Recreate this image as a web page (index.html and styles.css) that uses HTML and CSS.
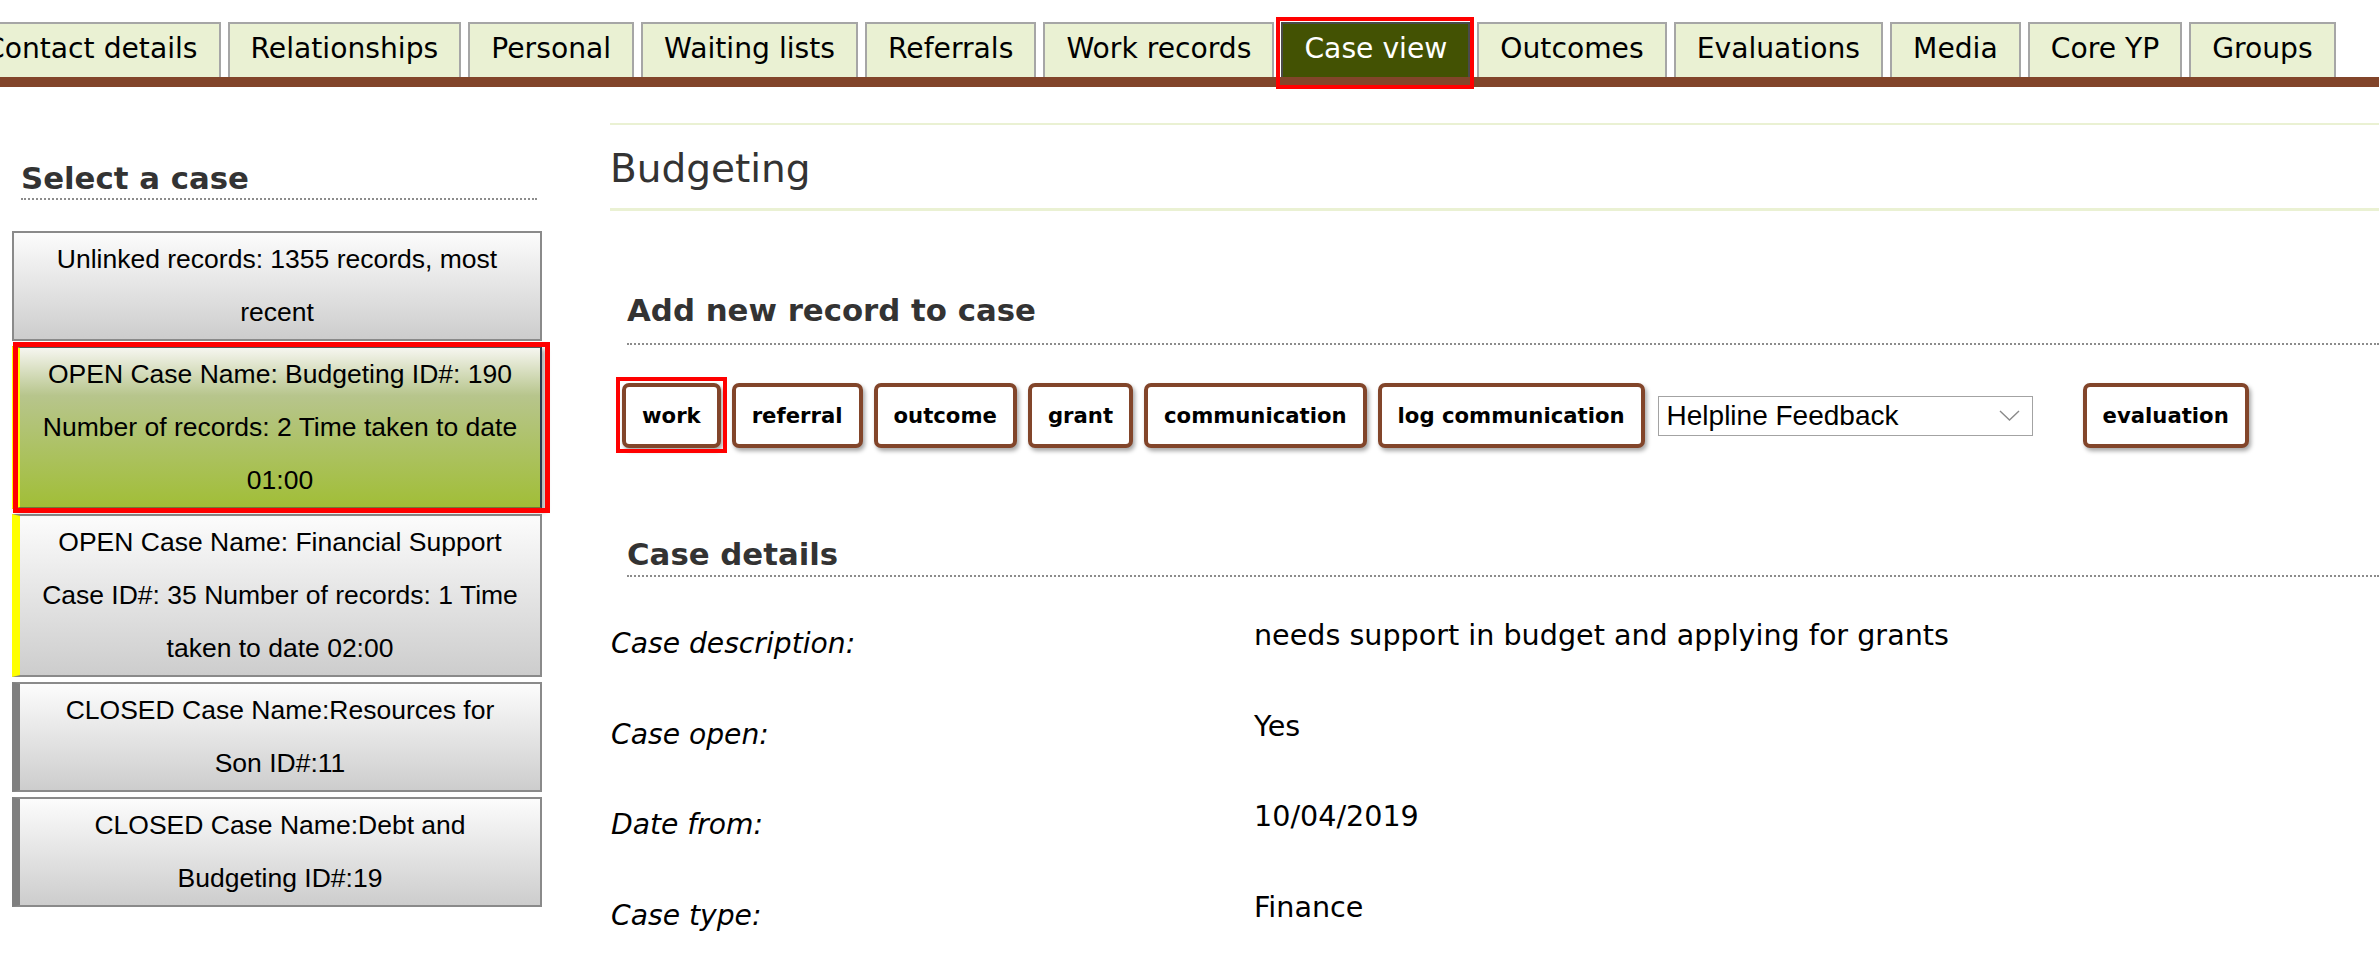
FILE: index.html
```html
<!DOCTYPE html>
<html lang="en">
<head>
<meta charset="utf-8">
<title>Case view</title>
<link rel="stylesheet" href="styles.css">
</head>
<body>
<nav class="tabbar">
  <ul class="tabs">
    <li class="tab">Contact details</li>
    <li class="tab">Relationships</li>
    <li class="tab">Personal</li>
    <li class="tab">Waiting lists</li>
    <li class="tab">Referrals</li>
    <li class="tab">Work records</li>
    <li class="tab active">Case view</li>
    <li class="tab">Outcomes</li>
    <li class="tab">Evaluations</li>
    <li class="tab">Media</li>
    <li class="tab">Core YP</li>
    <li class="tab">Groups</li>
  </ul>
</nav>
<main class="page">
  <aside class="sidebar">
    <h2 class="side-title">Select a case</h2>
    <ul class="cases">
      <li class="case case-unlinked">Unlinked records: 1355 records, most<br>recent</li>
      <li class="case case-open selected">OPEN Case Name: Budgeting ID#: 190<br>Number of records: 2 Time taken to date<br>01:00</li>
      <li class="case case-open">OPEN Case Name: Financial Support<br>Case ID#: 35 Number of records: 1 Time<br>taken to date 02:00</li>
      <li class="case case-closed">CLOSED Case Name:Resources for<br>Son ID#:11</li>
      <li class="case case-closed">CLOSED Case Name:Debt and<br>Budgeting ID#:19</li>
    </ul>
  </aside>
  <section class="content">
    <h1 class="case-title">Budgeting</h1>
    <h2 class="section-title add-title">Add new record to case</h2>
    <div class="actions">
      <button class="btn btn-marked" type="button">work</button>
      <button class="btn" type="button">referral</button>
      <button class="btn" type="button">outcome</button>
      <button class="btn" type="button">grant</button>
      <button class="btn" type="button">communication</button>
      <button class="btn" type="button">log communication</button>
      <div class="select">
        <span class="select-value">Helpline Feedback</span>
        <svg class="chevron" width="21" height="11" viewBox="0 0 21 11" aria-hidden="true"><path d="M1 1 L10.5 10 L20 1" fill="none" stroke="#8a8a8a" stroke-width="1.4"/></svg>
      </div>
      <button class="btn" type="button">evaluation</button>
    </div>
    <h2 class="section-title details-title">Case details</h2>
    <dl class="details">
      <div class="row"><dt>Case description:</dt><dd>needs support in budget and applying for grants</dd></div>
      <div class="row"><dt>Case open:</dt><dd>Yes</dd></div>
      <div class="row"><dt>Date from:</dt><dd>10/04/2019</dd></div>
      <div class="row"><dt>Case type:</dt><dd>Finance</dd></div>
    </dl>
  </section>
</main>
</body>
</html>
```
FILE: styles.css
```css
html, body {
  margin: 0;
  padding: 0;
  background: #fff;
}

body {
  font-family: "DejaVu Sans", Verdana, sans-serif;
  font-size: 28px;
  color: #000;
  overflow: hidden;
}

/* ---------- tabs ---------- */
.tabbar {
  padding-top: 22px;
  border-bottom: 10px solid #82452a;
}

.tabs {
  display: flex;
  gap: 7px;
  margin: 0 0 0 -38px;
  padding: 0;
  list-style: none;
}

.tab {
  flex: none;
  background: #eaf1d3;
  border: 2px solid #a6a6a6;
  border-bottom: 0;
  padding: 0 21px 4px;
  font-size: 28.2px;
  line-height: 49px;
  white-space: nowrap;
  color: #000;
}

.tab.active {
  background: #435203;
  color: #fff;
  border-color: #4a4a4a;
  position: relative;
  z-index: 1;
}

.tab.active::after {
  content: "";
  position: absolute;
  left: -7px;
  right: -6px;
  top: -7px;
  bottom: -12px;
  border: 4px solid #ff0000;
  pointer-events: none;
}

/* ---------- layout ---------- */
.page {
  display: flex;
  align-items: flex-start;
}

.sidebar {
  flex: none;
  width: 530px;
  margin-left: 12px;
}

.side-title {
  margin: 73px 0 0 9px;
  width: 516px;
  font-size: 30.8px;
  line-height: 36px;
  font-weight: bold;
  color: #333;
  padding-bottom: 2px;
  border-bottom: 2px dotted #8c8c8c;
}

.cases {
  list-style: none;
  margin: 31px 0 0;
  padding: 0;
}

.case {
  font-family: "Liberation Sans", Arial, sans-serif;
  font-size: 26.5px;
  line-height: 53px;
  text-align: center;
  color: #000;
  border: 2px solid #8a8a8a;
  background: linear-gradient(#fcfcfc, #cdcdcd);
  margin-bottom: 5px;
  padding: 0 8px;
}

.case-open {
  border-left: 8px solid #ffff00;
}

.case-closed {
  border-left: 8px solid #7f7f7f;
}

.case.selected {
  background: linear-gradient(#f6f6f0 0%, #b7c58c 30%, #a1be37 100%);
  border-top-color: #555;
  border-right-color: #2e3a4e;
  border-bottom-color: #6f7a3a;
  box-shadow: 4px 3px 5px rgba(0, 0, 0, 0.3);
  position: relative;
}

.case.selected::after {
  content: "";
  position: absolute;
  left: -7px;
  right: -10px;
  top: -6px;
  bottom: -6px;
  border: 5px solid #ff0000;
  pointer-events: none;
}

/* ---------- content ---------- */
.content {
  flex: 1;
  min-width: 0;
  margin-left: 68px;
  padding-top: 36px;
}

.case-title {
  margin: 0;
  font-size: 39px;
  font-weight: normal;
  line-height: 45px;
  color: #333;
  border-top: 2px solid #eaf1d3;
  border-bottom: 3px solid #eaf1d3;
  padding: 21px 0 17px;
}

.section-title {
  margin: 0 0 0 17px;
  font-size: 30.8px;
  font-weight: bold;
  line-height: 36px;
  color: #333;
  border-bottom: 2px dotted #8c8c8c;
}

.add-title {
  margin-top: 81px;
  padding-bottom: 15px;
}

.actions {
  display: flex;
  align-items: center;
  margin: 38px 0 0 12px;
}

.btn {
  box-sizing: border-box;
  height: 65px;
  margin: 0 11px 0 0;
  padding: 0 16px;
  font-family: "DejaVu Sans", Verdana, sans-serif;
  font-weight: bold;
  font-size: 21.2px;
  line-height: 57px;
  color: #000;
  background: #fff;
  border: 4px solid #82452a;
  border-radius: 7px;
  box-shadow: 2px 3px 4px rgba(0, 0, 0, 0.35);
  white-space: nowrap;
}

.btn-marked {
  position: relative;
}

.btn-marked::after {
  content: "";
  position: absolute;
  left: -10px;
  right: -10px;
  top: -10px;
  bottom: -9px;
  border: 4px solid #ff0000;
  pointer-events: none;
}

.select {
  box-sizing: border-box;
  width: 375px;
  height: 40px;
  margin: 0 50px 0 2px;
  padding: 0 12px 0 8px;
  display: flex;
  align-items: center;
  justify-content: space-between;
  border: 1px solid #a3a3a3;
  background: #fff;
  font-family: "Liberation Sans", Arial, sans-serif;
  font-size: 28px;
  color: #000;
}

.chevron {
  flex: none;
}

.details-title {
  margin-top: 88px;
  padding-bottom: 3px;
}

.details {
  margin: 42px 0 0;
}

.row {
  display: grid;
  grid-template-columns: 644px 1fr;
  margin-bottom: 49.5px;
}

.row dt {
  margin: 0;
  padding: 8px 0 0 1px;
  font-style: italic;
  font-size: 28.2px;
  line-height: 33px;
}

.row dd {
  margin: 0;
  font-size: 28.6px;
  line-height: 33px;
}
```
